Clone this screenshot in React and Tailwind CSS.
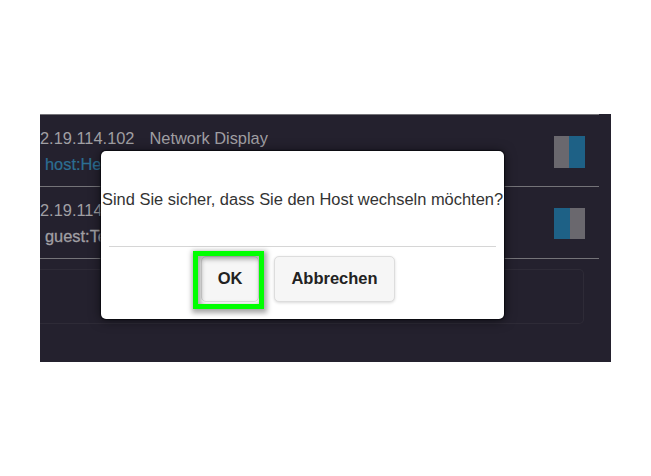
function Toggle({ on }) {
  return (
    <div className={`flex w-[31px] shrink-0 ${on ? 'h-[32px]' : 'h-[31px] flex-row-reverse'}`}>
      <span className="w-[15px] bg-[#6a686e]" />
      <span className="w-[16px] bg-[#1e6186]" />
    </div>
  );
}

function Row({ address, kind, name, nameClass, on }) {
  return (
    <div className="flex h-[72px] justify-between border-b border-[#747378] pr-[14px]">
      <div className="pt-[10px] text-[16.4px] leading-[26px] whitespace-nowrap text-[#a09fa3]">
        <div className="flex gap-[15px]">
          <span>{address}</span>
          {kind && <span>{kind}</span>}
        </div>
        <div className={`pl-[5px] ${nameClass}`}>{name}</div>
      </div>
      <div className="pt-[21px]">
        <Toggle on={on} />
      </div>
    </div>
  );
}

export default function App() {
  return (
    <div className="h-[476px] w-[651px] overflow-hidden bg-white pt-[114px] pl-[40px] font-['Liberation_Sans',Arial,sans-serif]">
      <div className="relative h-[248px] w-[571px] overflow-hidden bg-[#24212e]">
        <div className="w-[559px] border-t border-[#747378]">
          <Row address="2.19.114.102" kind="Network Display" name="host:He" nameClass="text-[#2c6e92] [-webkit-text-stroke:0.2px_#2c6e92]" on />
          <Row address="2.19.114" name="guest:Te" nameClass="text-[#a09fa3] [-webkit-text-stroke:0.3px_#a09fa3]" />
        </div>
        <div className="mt-[10px] h-[55px] w-[544px] rounded-r-[5px] border border-l-0 border-[#2e2b37]" />

        <div
          role="dialog"
          className="absolute top-[37px] left-[61px] flex h-[168px] w-[403px] flex-col rounded-[5px] bg-white shadow-[0_0_1px_1px_rgba(8,7,13,0.8),0_1px_12px_rgba(0,0,0,0.6)]"
        >
          <p className="mx-px flex h-[95px] items-center pt-px text-[16.45px] whitespace-nowrap text-[#333]">
            Sind Sie sicher, dass Sie den Host wechseln möchten?
          </p>
          <div className="mx-[8px] h-px bg-[#d6d6d6]" />
          <div className="flex gap-[15px] pt-[9px] pl-[100px] text-[16.5px] font-bold text-[#222]">
            <div className="relative">
              <button className="h-[46px] w-[58px] rounded-[5px] border border-[#ddd] bg-[#f6f6f6] pb-px">OK</button>
              <span className="pointer-events-none absolute -top-[5px] -left-[8px] h-[58px] w-[71px] border-[5px] border-[#00ff00] shadow-[1px_2px_5px_2px_rgba(0,0,0,0.35),inset_2px_2px_5px_1px_rgba(0,0,0,0.35)]" />
            </div>
            <button className="h-[46px] w-[121px] rounded-[5px] border border-[#ddd] bg-[#f6f6f6] pb-px shadow-[0_1px_3px_rgba(0,0,0,0.15)]">
              Abbrechen
            </button>
          </div>
        </div>
      </div>
    </div>
  );
}
